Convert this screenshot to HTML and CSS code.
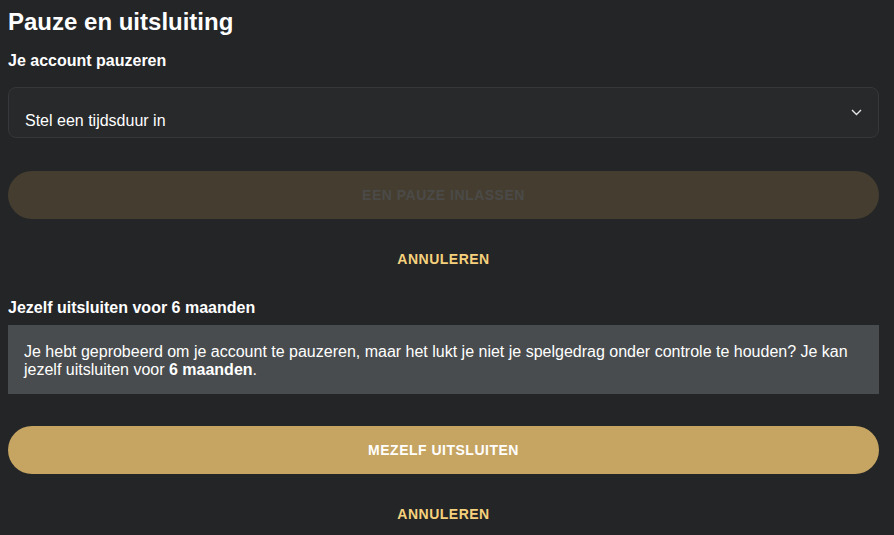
FILE: index.html
```html
<!DOCTYPE html>
<html lang="nl">
<head>
  <meta charset="UTF-8" />
  <meta name="viewport" content="width=device-width, initial-scale=1.0"/>
  <title>Pauze en uitsluiting</title>
  <link rel="stylesheet" href="styles.css">
</head>
<body>

  <main class="page">
    <h1 class="page-title">Pauze en uitsluiting</h1>

    <!-- Pause section -->
    <section class="block">
      <h2 class="block-title">Je account pauzeren</h2>
      <div class="select">
        <span class="select-value">Stel een tijdsduur in</span>
        <svg class="select-arrow" width="11" height="7" viewBox="0 0 11 7">
          <path d="M1 1 L5.5 5.5 L10 1" fill="none" stroke="#e6e6e6" stroke-width="1.4"/>
        </svg>
      </div>
      <button class="btn btn-disabled" type="button" disabled>Een pauze inlassen</button>
      <a class="cancel" href="#">Annuleren</a>
    </section>

    <!-- Self exclusion section -->
    <section class="block">
      <h2 class="block-title">Jezelf uitsluiten voor 6 maanden</h2>
      <p class="notice">Je hebt geprobeerd om je account te pauzeren, maar het lukt je niet je spelgedrag onder controle te houden? Je kan jezelf uitsluiten voor <strong>6 maanden</strong>.</p>
      <button class="btn btn-primary" type="button">Mezelf uitsluiten</button>
      <a class="cancel" href="#">Annuleren</a>
    </section>
  </main>

</body>
</html>
```

FILE: styles.css
```css
/* Reset and base styling */
* {
  margin: 0;
  padding: 0;
  box-sizing: border-box;
  font-family: 'Liberation Sans', Arial, sans-serif;
}

body {
  background: #232527;
  color: #fff;
  padding: 8px 15px 0 8px;
}

.page {
  display: flex;
  flex-direction: column;
}

/* Headings */
.page-title {
  font-size: 24px;
  line-height: 28px;
  font-weight: 700;
  margin-bottom: 16px;
}

.block {
  display: flex;
  flex-direction: column;
}

.block-title {
  font-size: 16px;
  line-height: 18px;
  font-weight: 700;
  margin-bottom: 17px;
}

.block + .block .block-title {
  margin-bottom: 8px;
}

/* Select */
.select {
  display: flex;
  align-items: flex-start;
  justify-content: space-between;
  height: 51px;
  padding: 23px 16px 6px;
  background: #27292a;
  border: 1px solid #35373a;
  border-radius: 8px;
  margin-bottom: 33px;
}

.select-value {
  font-size: 16px;
  line-height: 20px;
}

.select-arrow {
  margin-top: -2px;
}

/* Buttons */
.btn {
  height: 48px;
  border: none;
  border-radius: 24px;
  font-size: 14px;
  font-weight: 700;
  letter-spacing: 0.5px;
  text-transform: uppercase;
  cursor: pointer;
}

.btn-disabled {
  background: #453e30;
  color: #4b4a48;
  cursor: default;
}

.btn-primary {
  background: #c6a562;
  color: #fff;
}

.cancel {
  align-self: center;
  margin: 30px 0 30px;
  font-size: 14px;
  line-height: 20px;
  font-weight: 700;
  letter-spacing: 0.5px;
  text-transform: uppercase;
  color: #f6d17d;
  text-decoration: none;
}

/* Notice box */
.notice {
  background: #484c4e;
  font-size: 16px;
  line-height: 18px;
  padding: 18px 16px 15px;
  margin-bottom: 32px;
}
```
